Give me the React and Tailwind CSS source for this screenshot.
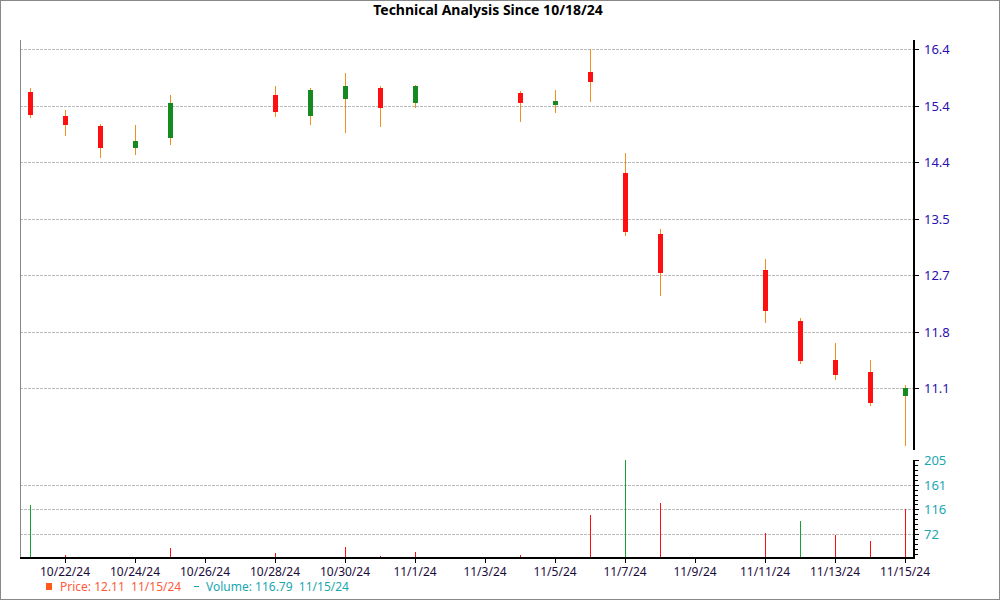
export default function App() {
  const C = [
    [30, 88, 92, 115, 118, 'r'], [65, 110, 116, 125, 136, 'r'], [100, 124, 126, 148, 158, 'r'],
    [135, 125, 141, 148, 155, 'g'], [170, 95, 103, 138, 145, 'g'], [275, 86, 95, 112, 117, 'r'],
    [310, 88, 90, 116, 125, 'g'], [345, 73, 86, 99, 133, 'g'], [380, 86, 88, 108, 127, 'r'],
    [415, 85, 86, 103, 108, 'g'], [520, 91, 93, 103, 122, 'r'], [555, 90, 101, 105, 113, 'g'],
    [590, 49, 72, 82, 102, 'r'], [625, 153, 173, 232, 236, 'r'], [660, 229, 234, 273, 296, 'r'],
    [765, 259, 270, 311, 323, 'r'], [800, 318, 321, 361, 364, 'r'], [835, 343, 360, 375, 380, 'r'],
    [870, 360, 372, 403, 406, 'r'], [905, 385, 388, 396, 446, 'g'],
  ];
  const V = [[30, 505, 'g'], [65, 555, 'r'], [170, 548, 'r'], [275, 553, 'r'], [345, 547, 'r'], [380, 556, 'r'], [415, 552, 'r'], [520, 555, 'r'], [590, 515, 'r'], [625, 460, 'g'], [660, 503, 'r'], [765, 533, 'r'], [800, 521, 'g'], [835, 535, 'r'], [870, 541, 'r'], [905, 509, 'r']];
  const P = [[49, '16.4'], [106, '15.4'], [162, '14.4'], [219, '13.5'], [275, '12.7'], [332, '11.8'], [388, '11.1']];
  const VL = [[460, '205'], [485, '161'], [509, '116'], [534, '72']];
  const X = [[65, '10/22/24'], [135, '10/24/24'], [205, '10/26/24'], [275, '10/28/24'], [345, '10/30/24'], [415, '11/1/24'], [485, '11/3/24'], [555, '11/5/24'], [625, '11/7/24'], [695, '11/9/24'], [765, '11/11/24'], [835, '11/13/24'], [905, '11/15/24']];
  return (
    <div className="w-[1000px] h-[600px] bg-white font-['Liberation_Sans',Arial,sans-serif]">
      <svg width="1000" height="600" className="block">
        <rect x="0.5" y="0.5" width="999" height="599" fill="none" stroke="#888" />
        <text x="488" y="15" textAnchor="middle" fontSize="14" fontWeight="bold" fill="#000">Technical Analysis Since 10/18/24</text>
        {P.map(([y]) => <line key={y} x1="20" x2="913" y1={y + 0.5} y2={y + 0.5} stroke="#bbb" strokeDasharray="3 1" />)}
        {VL.slice(1).map(([y]) => <line key={y} x1="20" x2="913" y1={y + 0.5} y2={y + 0.5} stroke="#bbb" strokeDasharray="3 1" />)}
        <line x1="20.5" x2="20.5" y1="40" y2="558" stroke="#888" />
        <line x1="914" x2="914" y1="40" y2="450" stroke="#000" strokeWidth="2" />
        <line x1="914" x2="914" y1="460" y2="559" stroke="#000" strokeWidth="2" />
        <line x1="20" x2="915" y1="558" y2="558" stroke="#000" strokeWidth="2" />
        {P.map(([y, t]) => <g key={t}><line x1="914" x2="919" y1={y + 0.5} y2={y + 0.5} stroke="#000" /><text x="924" y={y + 5} fontSize="13" fill="#2a0fb0">{t}</text></g>)}
        {[465, 470, 475, 480, 490, 495, 500, 504, 514, 519, 524, 529, 539, 544, 549, 554].map(y => <line key={y} x1="914" x2="918" y1={y + 0.5} y2={y + 0.5} stroke="#000" />)}
        {VL.map(([y, t]) => <g key={t}><line x1="914" x2="919" y1={y + 0.5} y2={y + 0.5} stroke="#000" /><text x="924" y={y + 5} fontSize="13" fill="#1aa7b0">{t}</text></g>)}
        {X.map(([x, t]) => <g key={t}><line x1={x + 0.5} x2={x + 0.5} y1="558" y2="563" stroke="#000" /><text x={x} y="576" textAnchor="middle" fontSize="12" fill="#1a0b3a">{t}</text></g>)}
        {C.map(([x, a, b, c, d, k]) => <g key={x}>
          <line x1={x + 0.5} x2={x + 0.5} y1={a} y2={d} stroke="#f09020" />
          <rect x={x - 2} y={b} width="5" height={Math.max(c - b, 3)} fill={k === 'r' ? '#ff1010' : '#168a20'} />
        </g>)}
        {V.map(([x, y, k]) => <line key={x} x1={x + 0.5} x2={x + 0.5} y1={y} y2="557" stroke={k === 'r' ? '#ff1010' : '#18a030'} />)}
        <rect x="46" y="583" width="6" height="7" fill="#ff5a1a" />
        <text x="60" y="591" fontSize="12" fill="#ff5a3a" className="whitespace-pre">Price: 12.11  11/15/24</text>
        <line x1="194" x2="199" y1="586.5" y2="586.5" stroke="#1aa7b0" />
        <text x="206" y="591" fontSize="12" fill="#1aa7b0" className="whitespace-pre">Volume: 116.79  11/15/24</text>
      </svg>
    </div>
  );
}
